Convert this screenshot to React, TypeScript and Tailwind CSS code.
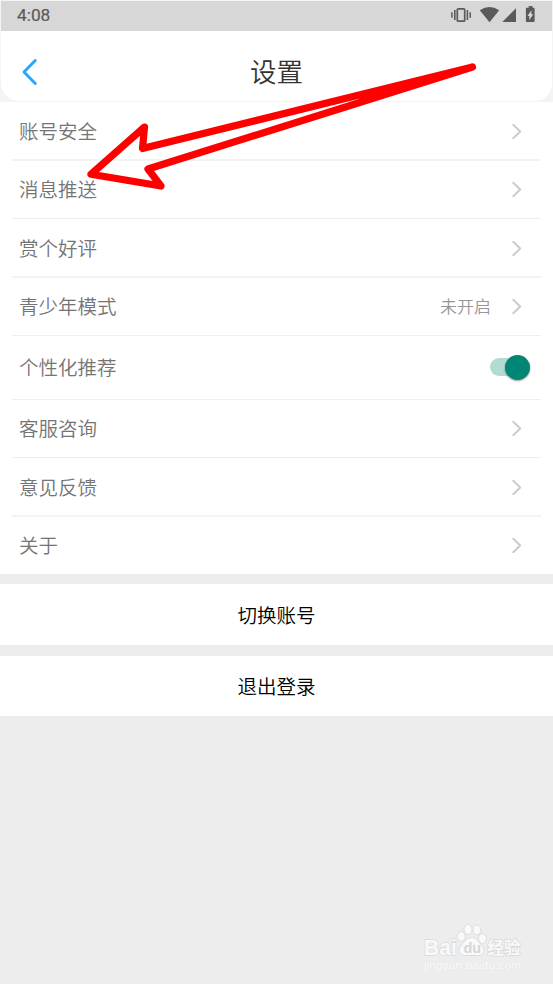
interface SettingItem {
  label: string;
  size: string;
  value?: string;
  toggle?: boolean;
}

const items: SettingItem[] = [
  { label: '账号安全', size: 'h-[59px] border-b-2 border-[#f3f3f3]' },
  { label: '消息推送', size: 'h-[58px] border-b border-[#eeeeee] pb-px' },
  { label: '赏个好评', size: 'h-[59px] border-b-2 border-[#f3f3f3]' },
  { label: '青少年模式', size: 'h-[58px] border-b border-[#eeeeee] pb-px', value: '未开启' },
  { label: '个性化推荐', size: 'h-[64px] border-b border-[#eeeeee] pb-px', toggle: true },
  { label: '客服咨询', size: 'h-[58px] border-b border-[#eeeeee] pb-px' },
  { label: '意见反馈', size: 'h-[59px] border-b-2 border-[#f3f3f3]' },
  { label: '关于', size: 'h-[57px] pb-px' },
];

const StatusBar = () => (
  <div className="flex h-[30px] items-center justify-between bg-[#d7d7d7] pl-4 text-[#5b5b5b]">
    <span className="mb-px font-['Roboto'] text-[17.3px] font-normal leading-none [-webkit-text-stroke:0.2px_#5b5b5b]">4:08</span>
    <svg width="102" height="30" viewBox="450 1 102 30" fill="#5a5a5a">
      <rect x="457.3" y="8.8" width="7.4" height="12.4" rx="1" fill="none" stroke="#5a5a5a" strokeWidth="1.7" />
      <path d="M454 10h1.6v10H454zM466.6 10h1.6v10h-1.6zM451.2 12.3h1.5v5.4h-1.5zM469.5 12.3h1.5v5.4h-1.5z" />
      <path d="M479.8 10.2Q489.5 3.8 499.2 10.2L489.5 22.2z" />
      <path d="M516 8.3V22h-13.7z" />
      <path d="M528.7 6h3.8v1.7h1.2q.9 0 .9.9v12.5q0 .9-.9.9h-6.9q-.9 0-.9-.9V8.6q0-.9.9-.9h1.9z" />
      <path d="M531.4 10.2v4h1.8l-3.9 6v-4.2h-1.8z" fill="#d7d7d7" />
    </svg>
  </div>
);

const Header = () => (
  <div className="grid h-[70px] grid-cols-[1fr_auto_1fr] items-center rounded-b-[18px] bg-white pt-[11px]">
    <svg className="ml-5" width="18" height="28" viewBox="0 0 18 28" fill="none">
      <path d="M14.3 2.6L3 14l11.3 11.4" stroke="#26a6fb" strokeWidth="2.9" strokeLinecap="round" strokeLinejoin="round" />
    </svg>
    <h1 className="text-[26.5px] font-[350] leading-none text-[#333]">设置</h1>
  </div>
);

const Chevron = () => (
  <svg className="translate-y-[0.5px]" width="10" height="16" viewBox="0 0 10 16" fill="none">
    <path d="M1.3 1.3L8.2 8l-6.9 6.7" stroke="#ccc" strokeWidth="2" strokeLinecap="round" strokeLinejoin="round" />
  </svg>
);

const Toggle = () => (
  <span className="relative -mr-2 flex h-[18px] w-10 items-center rounded-full bg-[#b2dbd6]">
    <span className="absolute right-0 h-[25px] w-[25px] rounded-full bg-[#018574] shadow-[0_1px_2px_rgba(0,0,0,0.4)]" />
  </span>
);

const SettingRow = ({ label, size, value, toggle }: SettingItem) => (
  <div className={`mx-3 flex items-center pl-[7px] pr-[19px] ${size}`}>
    <span className="flex-1 text-[19.5px] font-[350] leading-none text-[#747474]">{label}</span>
    {value && <span className="mb-px mr-[21px] text-[17px] font-[350] leading-none text-[#969696]">{value}</span>}
    {toggle ? <Toggle /> : <Chevron />}
  </div>
);

// Hand drawn pointer to the message settings
const Arrow = () => (
  <svg className="pointer-events-none absolute left-0 top-0" width="553" height="220" fill="none">
    <path
      d="M472.5 67L142.5 148.5L144.5 127L91 174.3L161 186L148 169Z"
      stroke="#f00"
      strokeWidth="7.2"
      strokeLinecap="round"
      strokeLinejoin="round"
    />
  </svg>
);

const Watermark = () => (
  <svg className="absolute left-[420px] top-[920px]" width="110" height="56" fill="#f9f9f9" stroke="#d9d9d9" strokeWidth="1.4">
    <text x="4" y="35" fontFamily="Liberation Sans" fontSize="22" fontWeight="bold" textLength="33" lengthAdjust="spacingAndGlyphs" paintOrder="stroke">Bai</text>
    <g strokeWidth="0.9">
      <ellipse cx="41.2" cy="16.5" rx="4" ry="5" />
      <ellipse cx="48" cy="9.5" rx="4" ry="5" />
      <ellipse cx="56.8" cy="9.8" rx="4" ry="5" />
      <ellipse cx="62.5" cy="18.5" rx="4" ry="5" />
      <path d="M51.5 17.5c4.5 0 7 4 10 7.5 4.5 5 2.5 10.5-3 10.5H44.5c-5.5 0-7.5-5.5-3-10.5 3-3.5 5.5-7.5 10-7.5z" />
    </g>
    <text x="43.5" y="33" fontFamily="Liberation Sans" fontSize="14.5" fontWeight="bold" fill="#d6d6d6" stroke="none">du</text>
    <text x="67.5" y="33.5" fontFamily="Noto Sans CJK SC" fontSize="16.5" fontWeight="bold" paintOrder="stroke">经验</text>
    <text x="4" y="48.5" fontFamily="Liberation Sans" fontSize="11" fill="#fafafa" textLength="97" lengthAdjust="spacingAndGlyphs" stroke="#e6e6e6" strokeWidth="0.6" paintOrder="stroke">jingyan.baidu.com</text>
  </svg>
);

const App = () => {
  return (
    <div className="relative h-[984px] w-[553px] overflow-hidden bg-[#ededed] font-['Noto_Sans_CJK_SC',sans-serif]">
      <div className="h-[102px] bg-[#f4f4f4] px-px pt-px">
        <StatusBar />
        <Header />
      </div>
      <div className="bg-white">
        {items.map((item) => (
          <SettingRow key={item.label} {...item} />
        ))}
      </div>
      <button className="mt-2.5 flex h-[61px] w-full items-center justify-center bg-white text-[19.5px] font-[350] text-black">
        切换账号
      </button>
      <button className="mt-[11px] flex h-[60px] w-full items-center justify-center bg-white text-[19.5px] font-[350] text-black">
        退出登录
      </button>
      <Arrow />
      <Watermark />
    </div>
  );
};

export default App;
